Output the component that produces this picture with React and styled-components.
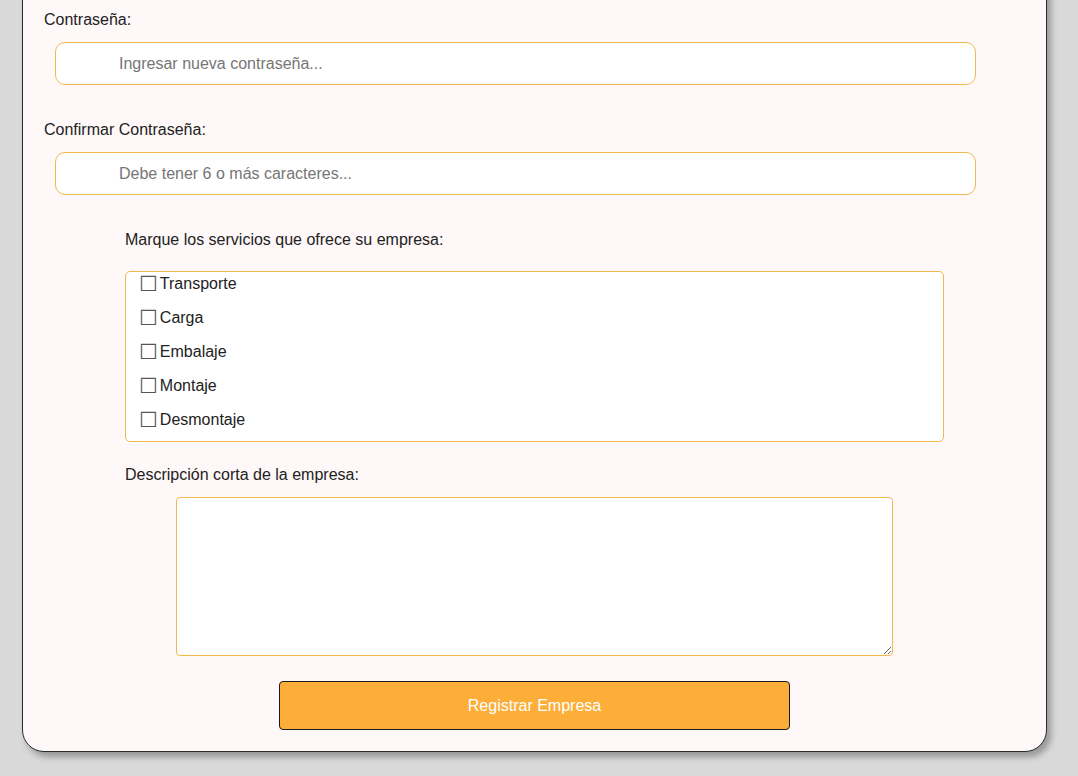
import React from 'react';
import styled, { createGlobalStyle } from 'styled-components';

const GlobalStyle = createGlobalStyle`
  html, body {
    margin: 0;
    padding: 0;
    background: #d9d9d9;
    font-family: "Liberation Sans", Arial, sans-serif;
    overflow: hidden;
  }
`;

const Page = styled.div`
  height: 776px;
  padding: 0 31px 0 22px;
  overflow: hidden;
`;

const Card = styled.form`
  margin-top: -60px;
  width: 1025px;
  box-sizing: border-box;
  background: #fff8f8;
  border: 1px solid #2b2b2b;
  border-radius: 22px;
  box-shadow: 4px 5px 6px rgba(0, 0, 0, 0.3);
  padding: 70px 0 21px 21px;
  display: flex;
  flex-direction: column;
  align-items: flex-start;
`;

const Label = styled.label`
  display: block;
  font-size: 16px;
  line-height: 18px;
  color: #222;
  margin-left: ${(props) => (props.indent ? '81px' : '0')};
  margin-top: ${(props) => props.top || '0'};
`;

const Input = styled.input`
  box-sizing: border-box;
  width: 921px;
  height: 43px;
  margin: 13px 0 0 11px;
  border: 1px solid #f1b94b;
  border-radius: 10px;
  background: #fff;
  padding-left: 63px;
  font-family: inherit;
  font-size: 16px;
  color: #222;
  outline: none;

  &::placeholder {
    color: #767676;
  }
`;

const ServiceBox = styled.div`
  box-sizing: border-box;
  width: 819px;
  height: 171px;
  margin: 22px 0 0 81px;
  border: 1px solid #f1b94b;
  border-radius: 5px;
  background: #fff;
  padding: 0 0 0 13px;
  display: flex;
  flex-direction: column;
  gap: 10px;
`;

const Service = styled.label`
  display: flex;
  align-items: center;
  height: 24px;
  font-size: 16px;
  color: #222;
  cursor: pointer;
`;

const Box = styled.span`
  font-family: "DejaVu Sans", sans-serif;
  font-size: 21px;
  font-weight: bold;
  color: #555;
  margin-right: 2px;
  line-height: 1;
`;

const TextArea = styled.textarea`
  box-sizing: border-box;
  width: 717px;
  height: 159px;
  margin: 13px 0 0 132px;
  border: 1px solid #f1b94b;
  border-radius: 4px;
  background: #fff;
  font-family: inherit;
  font-size: 16px;
  outline: none;
`;

const SubmitButton = styled.button`
  box-sizing: border-box;
  width: 511px;
  height: 49px;
  margin: 25px 0 0 235px;
  background: #fcae39;
  color: #fff;
  border: 1px solid #1a1a1a;
  border-radius: 4px;
  font-family: inherit;
  font-size: 16px;
  cursor: pointer;
`;

const services = ['Transporte', 'Carga', 'Embalaje', 'Montaje', 'Desmontaje'];

export default function App() {
  return (
    <Page>
      <GlobalStyle />
      <Card onSubmit={(e) => e.preventDefault()}>
        <Label>Contraseña:</Label>
        <Input type="password" placeholder="Ingresar nueva contraseña..." />

        <Label top="36px">Confirmar Contraseña:</Label>
        <Input type="password" placeholder="Debe tener 6 o más caracteres..." />

        <Label indent top="36px">Marque los servicios que ofrece su empresa:</Label>
        <ServiceBox>
          {services.map((s) => (
            <Service key={s}>
              <Box>☐</Box>
              {s}
            </Service>
          ))}
        </ServiceBox>

        <Label indent top="24px">Descripción corta de la empresa:</Label>
        <TextArea />

        <SubmitButton type="submit">Registrar Empresa</SubmitButton>
      </Card>
    </Page>
  );
}
